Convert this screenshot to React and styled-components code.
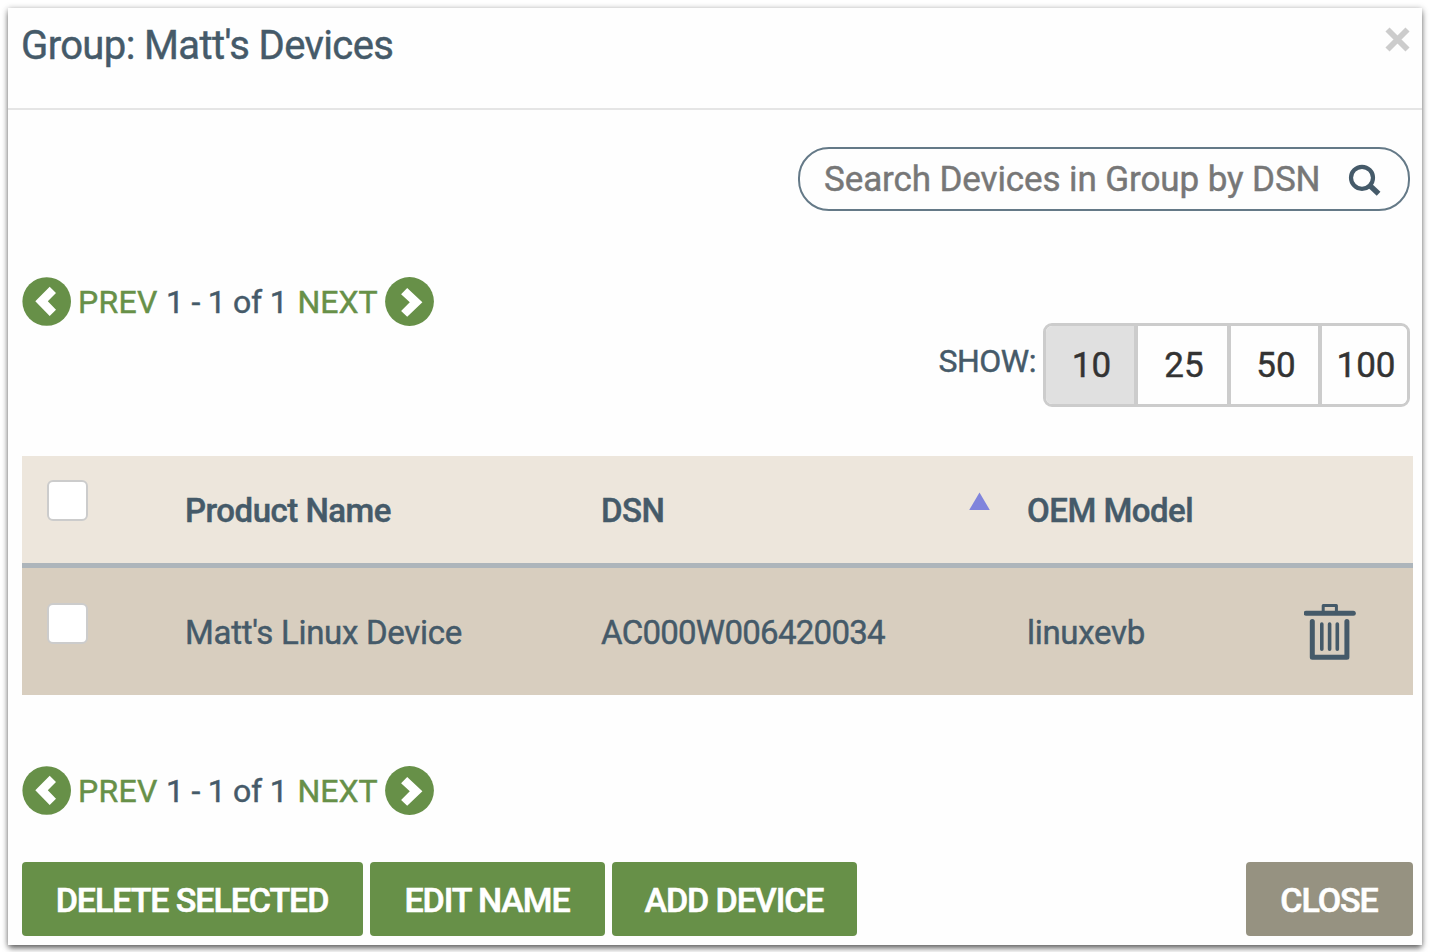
import React from "react";
import styled, { createGlobalStyle } from "styled-components";

const slate = "#455a69";
const green = "#679048";

const GlobalStyle = createGlobalStyle`
  *, *::before, *::after { box-sizing: border-box; }
  body {
    margin: 0;
    background: #fff;
    color: ${slate};
    font-family: Roboto, "Liberation Sans", sans-serif;
    font-size: 32px;
    font-weight: 400;
    -webkit-text-stroke: 0.45px;
    overflow: hidden;
  }
  button, input { font-family: inherit; font-weight: inherit; margin: 0; }
`;

const Page = styled.div`
  padding: 8px 8px 7px;
`;

const Dialog = styled.section`
  height: 937px;
  background: #fefefe;
  box-shadow: 0 4px 6px -1px rgba(0, 0, 0, 0.5), 0 1px 6px rgba(0, 0, 0, 0.35);
`;

const DialogHeader = styled.header`
  display: flex;
  justify-content: space-between;
  align-items: flex-start;
  height: 102px;
  padding: 19px 12px 0 13px;
  border-bottom: 2px solid #e5e5e5;
`;

const Title = styled.h1`
  margin: 0;
  font-size: 40px;
  font-weight: 400;
  line-height: 38px;
  letter-spacing: -0.62px;
  white-space: nowrap;
`;

const Dismiss = styled.button`
  display: flex;
  padding: 0;
  border: 0;
  background: none;
`;

const DialogBody = styled.div`
  padding: 37px 9px 0 14px;
`;

const SearchBox = styled.label`
  display: flex;
  align-items: center;
  width: 612px;
  height: 64px;
  margin: 0 3px 0 auto;
  padding: 1px 27px 0 24px;
  border: 2.5px solid #647987;
  border-radius: 31px;
`;

const SearchInput = styled.input`
  flex: 1;
  min-width: 0;
  height: 50px;
  padding: 0;
  border: 0;
  outline: 0;
  background: none;
  font-size: 35px;
  letter-spacing: -0.1px;
  color: ${slate};
  &::placeholder { color: #777; opacity: 1; }
`;

const SearchIcon = styled.svg`
  margin-top: 2px;
`;

const Pager = styled.nav`
  display: flex;
  align-items: center;
  height: 49px;
  margin-top: ${(p) => p.$gap}px;
  line-height: 50px;
  white-space: pre;
`;

const PagerLink = styled.a`
  display: flex;
  align-items: center;
  gap: 7px;
  color: ${green};
  svg { display: block; }
`;

const PagerPrev = styled.span`
  letter-spacing: 0.3px;
`;

const PagerRange = styled.span`
  width: 123.5px;
  margin: 0 8px 0 8.3px;
  letter-spacing: -0.25px;
`;

const PageSize = styled.div`
  display: flex;
  justify-content: flex-end;
  margin: -3px 3px 0 0;
`;

const PageSizeLabel = styled.span`
  margin-right: 7px;
  line-height: 76px;
  letter-spacing: -0.5px;
`;

const SizeGroup = styled.div`
  display: flex;
  width: 367px;
  height: 84px;
  border: 3px solid #ccc;
  border-radius: 9px;
  overflow: hidden;
`;

const SizeOption = styled.button`
  flex: none;
  width: ${(p) => p.$width}px;
  padding: 1px 0 0 ${(p) => p.$shift}px;
  border: 0;
  border-left: ${(p) => (p.$first ? 0 : 4)}px solid #ccc;
  background: ${(p) => (p.$active ? "#e0e0e0" : "#fefefe")};
  color: #333;
  font-size: 35px;
`;

const Grid = styled.div`
  margin-top: 49px;
`;

const GridRow = styled.div`
  display: grid;
  grid-template-columns: 163px 416px 426px 277px 1fr;
  height: ${(p) => (p.$head ? 112 : 127)}px;
  background: ${(p) => (p.$head ? "#ede6dc" : "#d8cebf")};
  border-bottom: ${(p) => (p.$head ? "5px solid #adb5bb" : "0")};
  font-weight: ${(p) => (p.$head ? 500 : 400)};
  font-size: 33px;
  letter-spacing: ${(p) => (p.$head ? -0.5 : -0.3)}px;
`;

const Cell = styled.div`
  display: flex;
  justify-content: space-between;
  padding: ${(p) => p.$top}px 37px 0 0;
  line-height: 40px;
  white-space: nowrap;
`;

const SerialCell = styled(Cell)`
  letter-spacing: -0.72px;
`;

const CheckCell = styled.div`
  padding: ${(p) => p.$top}px 0 0 25px;
`;

const Checkbox = styled.input.attrs({ type: "checkbox" })`
  appearance: none;
  display: block;
  width: 41px;
  height: 41px;
  background: #fff;
  border: 2px solid #ccc;
  border-radius: 6px;
`;

const SortMark = styled.svg`
  display: block;
  margin-top: 1px;
`;

const Actions = styled.footer`
  display: flex;
  gap: 7px;
  margin-top: 47px;
`;

const Action = styled.button`
  width: ${(p) => p.$width}px;
  height: 74px;
  margin-left: ${(p) => (p.$end ? "auto" : 0)};
  padding: 1px 1px 0 0;
  border: 0;
  border-radius: 4px;
  background: ${(p) => (p.$end ? "#969281" : green)};
  color: #fff;
  font-size: 34px;
  font-weight: 500;
  letter-spacing: -1.08px;
  -webkit-text-stroke: 0.6px;
  white-space: nowrap;
`;

function PagerBar({ gap }) {
  return (
    <Pager $gap={gap}>
      <PagerLink>
        <svg width="49" height="49" viewBox="0 0 49 49">
          <circle cx="24.7" cy="24.5" r="24.3" fill={green} />
          <path d="M13.3 24.2 27.7 9.8 34 16 25.8 24.2 34 32.7 27.7 39Z" fill="#fff" />
        </svg>
        <PagerPrev>PREV</PagerPrev>
      </PagerLink>
      <PagerRange>1 - 1 of 1</PagerRange>
      <PagerLink>
        <span>NEXT</span>
        <svg width="49" height="49" viewBox="0 0 49 49">
          <circle cx="24.5" cy="24.5" r="24.4" fill={green} />
          <path d="M37.4 25.3 22.2 11.1 16.1 17.3 24.8 25.3 16.1 34 22.2 39.8Z" fill="#fff" />
        </svg>
      </PagerLink>
    </Pager>
  );
}

function TrashIcon() {
  return (
    <svg width="53" height="58" viewBox="0 0 53 58" fill="none" stroke={slate} strokeLinecap="round" strokeLinejoin="round">
      <path d="M2.2 10.3H49.3" strokeWidth="5" />
      <path d="M19.2 10V2.4H32.4V10" strokeWidth="3" />
      <path d="M8.3 18.5V54.2H42.9V18.5" strokeWidth="5" />
      <path d="M17.8 21V46.2M25.6 21V46.2M33.3 21V46.2" strokeWidth="3.6" />
    </svg>
  );
}

export default function App() {
  return (
    <Page>
      <GlobalStyle />
      <Dialog>
        <DialogHeader>
          <Title>Group: Matt's Devices</Title>
          <Dismiss aria-label="Close">
            <svg width="25" height="25" viewBox="0 0 25 25">
              <path d="M2.5 2.5 22.5 22.5M22.5 2.5 2.5 22.5" stroke="#ccc" strokeWidth="5.8" />
            </svg>
          </Dismiss>
        </DialogHeader>
        <DialogBody>
          <SearchBox>
            <SearchInput placeholder="Search Devices in Group by DSN" />
            <SearchIcon width="33" height="33" viewBox="0 0 33 33" fill="none" stroke={slate}>
              <circle cx="14" cy="13.8" r="11" strokeWidth="4.2" />
              <path d="M21.5 21.3 30.6 29.8" strokeWidth="5.4" />
            </SearchIcon>
          </SearchBox>

          <PagerBar gap={66} />

          <PageSize>
            <PageSizeLabel>SHOW:</PageSizeLabel>
            <SizeGroup>
              <SizeOption $width={88} $first $active $shift={3}>10</SizeOption>
              <SizeOption $width={93} $shift={3}>25</SizeOption>
              <SizeOption $width={91} $shift={3}>50</SizeOption>
              <SizeOption $width={89} $shift={3}>100</SizeOption>
            </SizeGroup>
          </PageSize>

          <Grid>
            <GridRow $head>
              <CheckCell $top={24}><Checkbox /></CheckCell>
              <Cell $top={35}>Product Name</Cell>
              <Cell $top={35}>
                DSN
                <SortMark width="21" height="19" viewBox="0 0 21 19">
                  <path d="M10.5 0.5 20.8 18H0.2Z" fill="#8084dc" />
                </SortMark>
              </Cell>
              <Cell $top={35}>OEM Model</Cell>
              <Cell />
            </GridRow>
            <GridRow>
              <CheckCell $top={35}><Checkbox /></CheckCell>
              <Cell $top={45}>Matt's Linux Device</Cell>
              <SerialCell $top={45}>AC000W006420034</SerialCell>
              <Cell $top={45}>linuxevb</Cell>
              <Cell $top={35}><TrashIcon /></Cell>
            </GridRow>
          </Grid>

          <PagerBar gap={71} />

          <Actions>
            <Action $width={341}>DELETE SELECTED</Action>
            <Action $width={235}>EDIT NAME</Action>
            <Action $width={245}>ADD DEVICE</Action>
            <Action $width={167} $end>CLOSE</Action>
          </Actions>
        </DialogBody>
      </Dialog>
    </Page>
  );
}
